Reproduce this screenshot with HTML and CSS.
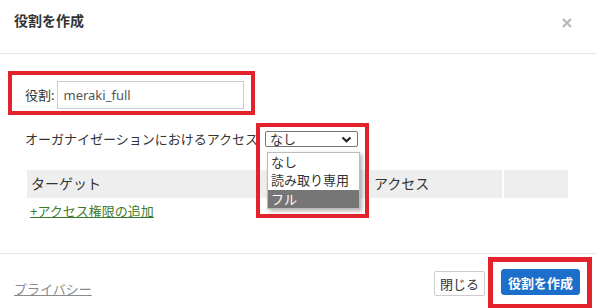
FILE: index.html
```html
<!DOCTYPE html>
<html>
<head>
  <title>役割を作成</title>
  <link rel="stylesheet" href="styles.css">
</head>
<body>
  <div class="modal">
    <div class="modal-header">
      <h1>役割を作成</h1>
      <span class="close">
        <svg width="10" height="10" viewBox="0 0 10 10"><path d="M1 1 L9 9 M9 1 L1 9" stroke="#b5b5b5" stroke-width="2"/></svg>
      </span>
    </div>

    <div class="modal-body">
      <div class="field-box">
        <label>役割:</label>
        <div class="text-input">meraki_full</div>
      </div>

      <div class="org-row">
        <span>オーガナイゼーションにおけるアクセス</span>
        <div class="select-wrap">
          <div class="select">
            <span>なし</span>
            <svg width="11" height="7" viewBox="0 0 11 7"><path d="M1.5 1.5 L5.5 5.2 L9.5 1.5" fill="none" stroke="#222" stroke-width="2.2"/></svg>
          </div>
          <ul class="options">
            <li>なし</li>
            <li>読み取り専用</li>
            <li class="active">フル</li>
          </ul>
        </div>
      </div>

      <div class="perm-table">
        <div class="th">ターゲット</div>
        <div class="th">アクセス</div>
        <div class="th"></div>
      </div>

      <a class="add-link" href="#">+アクセス権限の追加</a>
    </div>

    <div class="modal-footer">
      <a class="privacy" href="#">プライバシー</a>
      <div class="buttons">
        <button class="btn">閉じる</button>
        <span class="marked">
          <button class="btn btn-primary">役割を作成</button>
        </span>
      </div>
    </div>
  </div>
</body>
</html>
```

FILE: styles.css
```css
body {
  margin: 0;
  font-family: "Noto Sans", "Noto Sans CJK JP", sans-serif;
  font-size: 13px;
  line-height: 18px;
  color: #333;
  background: #fff;
}
.modal {
  width: 597px;
  height: 308px;
  overflow: hidden;
}
.modal-header {
  height: 54px;
  box-sizing: border-box;
  border-bottom: 1px solid #e5e5e5;
  padding: 12px 25px 0 14px;
  display: flex;
  justify-content: space-between;
  align-items: flex-start;
}
.modal-header h1 {
  margin: 0;
  font-size: 14px;
  font-weight: bold;
  line-height: 18px;
  color: #333;
}
.close {
  margin-top: 6px;
  display: block;
  line-height: 0;
}
.modal-body {
  height: 199px;
  box-sizing: border-box;
  padding: 17px 0 0 8px;
}
.field-box {
  width: 247px;
  box-sizing: border-box;
  border: 4px solid #e3222b;
  padding: 6px 6px 2px 13px;
  display: flex;
  align-items: center;
  gap: 3px;
}
.text-input {
  width: 187px;
  height: 28px;
  box-sizing: border-box;
  border: 1px solid #ccc;
  padding: 0 5px;
  line-height: 26px;
  color: #555;
}
.org-row {
  margin-top: 14px;
  padding-left: 17px;
  height: 20px;
  display: flex;
  align-items: center;
  gap: 7px;
}
.select-wrap {
  position: relative;
}
.select-wrap::after {
  content: "";
  position: absolute;
  top: -8px;
  left: -9px;
  width: 113px;
  height: 95px;
  box-sizing: border-box;
  border: 4px solid #e3222b;
}
.select {
  width: 93px;
  height: 16px;
  box-sizing: border-box;
  border: 1px solid #767676;
  border-radius: 2px;
  padding: 0 5px 0 4px;
  display: flex;
  justify-content: space-between;
  align-items: center;
  line-height: 14px;
  font-size: 13px;
}
.options {
  position: absolute;
  top: 21px;
  left: 2px;
  width: 91px;
  margin: 0;
  padding: 0;
  list-style: none;
  background: #fff;
  border: 1px solid #bbb;
  box-shadow: 2px 2px 4px rgba(0, 0, 0, 0.3);
  z-index: 2;
}
.options li {
  height: 18px;
  line-height: 18px;
  padding-left: 3px;
}
.options li.active {
  margin-top: 1px;
  background: #767676;
  color: #fff;
}
.perm-table {
  margin: 21px 0 0 19px;
  display: grid;
  grid-template-columns: 341px 132px 64px;
  gap: 2px;
}
.th {
  height: 28px;
  background: #eee;
  padding-left: 4px;
  line-height: 28px;
  font-size: 14px;
}
.add-link {
  display: inline-block;
  margin: 4px 0 0 22px;
  color: #3d7b2c;
  text-decoration: underline;
}
.modal-footer {
  border-top: 1px solid #e5e5e5;
  padding: 15px 17px 0 14px;
  display: flex;
  justify-content: space-between;
  align-items: flex-start;
}
.privacy {
  margin-top: 11px;
  color: #8a8a8a;
  text-decoration: underline;
}
.buttons {
  display: flex;
  align-items: flex-start;
  gap: 16px;
}
.btn {
  font-family: "Noto Sans", "Noto Sans CJK JP", sans-serif;
  font-size: 13px;
  height: 25px;
  margin-top: 2px;
  padding: 0 5px;
  background: #fff;
  border: 1px solid #ccc;
  border-radius: 2px;
  color: #333;
}
.marked {
  position: relative;
  display: block;
}
.marked::after {
  content: "";
  position: absolute;
  top: -12px;
  left: -13px;
  right: -12px;
  bottom: -14px;
  border: 5px solid #e3222b;
}
.btn-primary {
  display: block;
  height: 26px;
  width: 79px;
  margin-top: 0;
  background: #1b6fca;
  border-color: #1b6fca;
  border-radius: 3px;
  color: #fff;
  font-weight: bold;
}
```
